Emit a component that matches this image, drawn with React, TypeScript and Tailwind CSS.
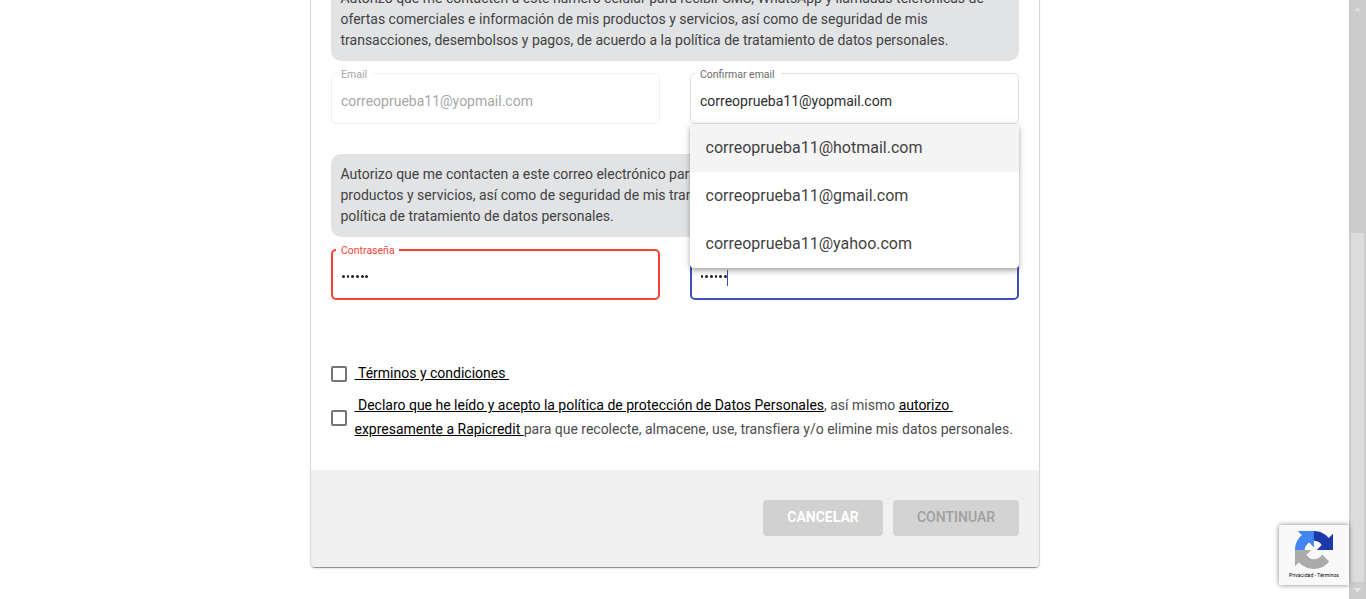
import type { ReactNode } from "react";

function Field({
  label,
  border,
  labelClass,
  children,
}: {
  label: string;
  border: string;
  labelClass: string;
  children: ReactNode;
}) {
  return (
    <div className={`relative flex h-[51px] w-[329px] items-center rounded-[5px] ${border}`}>
      <span
        className={`absolute left-0 bg-white text-[10.5px] leading-[12px] whitespace-nowrap ${labelClass}`}
      >
        {label}
      </span>
      {children}
    </div>
  );
}

function Notice({ children }: { children: ReactNode }) {
  return (
    <div className="rounded-[10px] bg-[#e1e3e5] p-[10px] pl-[9.5px] text-[14px] leading-[21px] whitespace-nowrap text-[#424242]">
      {children}
    </div>
  );
}

function Dots() {
  return (
    <span className="flex gap-[1.9px]">
      {[0, 1, 2, 3, 4, 5].map((i) => (
        <span key={i} className="h-[2.8px] w-[2.8px] rounded-full bg-[#222]" />
      ))}
    </span>
  );
}

function Checkbox() {
  return <span className="mt-[2px] h-4 w-4 shrink-0 rounded-[2px] border-2 border-[#757575] bg-white" />;
}

function Recaptcha() {
  return (
    <div className="absolute top-[525px] right-[17px] flex h-[60px] w-[70px] flex-col items-center rounded-l-[2px] bg-[#f9f9f9] pt-[6px] shadow-[0_0_5px_#808080]">
      <svg className="h-[38px] w-[38px]" viewBox="0 0 64 64">
        <path
          fill="#1C3AA9"
          d="M64 31.955l-.033-1.37V4.687l-7.16 7.16C50.948 4.674 42.033.093 32.05.093c-10.4 0-19.622 4.96-25.458 12.64l11.736 11.86a15.55 15.55 0 0 1 4.754-5.334c2.05-1.6 4.952-2.906 8.968-2.906.485 0 .86.057 1.135.163 4.976.393 9.288 3.14 11.828 7.124l-8.307 8.307L64 31.953"
        />
        <path
          fill="#4285F4"
          d="M31.862.094l-1.37.033H4.594l7.16 7.16C4.58 13.147 0 22.06 0 32.046c0 10.4 4.96 19.622 12.64 25.458L24.5 45.768a15.55 15.55 0 0 1-5.334-4.754c-1.6-2.05-2.906-4.952-2.906-8.968 0-.485.057-.86.163-1.135.393-4.976 3.14-9.288 7.124-11.828l8.307 8.307L31.86.095"
        />
        <path
          fill="#ABABAB"
          d="M.001 32.045l.033 1.37v25.898l7.16-7.16c5.86 7.173 14.774 11.754 24.76 11.754 10.4 0 19.622-4.96 25.458-12.64l-11.736-11.86a15.55 15.55 0 0 1-4.754 5.334c-2.05 1.6-4.952 2.906-8.968 2.906-.485 0-.86-.057-1.135-.163-4.976-.393-9.288-3.14-11.828-7.124l8.307-8.307c-10.522.04-22.4.066-27.295-.005"
        />
      </svg>
      <span className="mt-[2px] text-[5px] leading-[8px] tracking-[0.1px] whitespace-nowrap text-black">
        Privacidad - Términos
      </span>
    </div>
  );
}

function Scrollbar() {
  return (
    <div className="flex h-full w-[17px] shrink-0 flex-col items-center bg-[#cccccc]">
      <svg className="h-[17px] w-[17px] shrink-0" viewBox="0 0 17 17">
        <path d="M5 11L8.5 7L12 11Z" fill="#dcdcdd" />
      </svg>
      <div className="mt-[216px] h-[349px] w-[13px] bg-[#dcdcdd]" />
      <svg className="h-[17px] w-[17px] shrink-0" viewBox="0 0 17 17">
        <path d="M4.500 6L8.500 10.500L12.500 6Z" fill="#e6e6e6" />
      </svg>
    </div>
  );
}

const link = "text-black underline underline-offset-1";

export default function App() {
  return (
    <div className="relative flex h-[599px] w-full overflow-hidden bg-white font-['Roboto',sans-serif]">
      <main className="flex flex-1 items-start pl-[311px]">
        <section className="-mt-[40px] flex h-[607px] w-[728px] shrink-0 flex-col rounded-[4px] bg-white shadow-[0_0_0_1px_rgba(0,0,0,0.1),0_2px_1px_-1px_rgba(0,0,0,0.2),0_1px_1px_0_rgba(0,0,0,0.14),0_1px_3px_0_rgba(0,0,0,0.12)]">
          <div className="flex h-[510px] flex-col px-5 pt-[18px]">
            <Notice>
              Autorizo que me contacten a este número celular para recibir SMS, WhatsApp y llamadas telefónicas de
              <br />
              ofertas comerciales e información de mis productos y servicios, así como de seguridad de mis
              <br />
              transacciones, desembolsos y pagos, de acuerdo a la política de tratamiento de datos personales.
            </Notice>
            <div className="relative mt-3 flex justify-between">
              <Field label="Email" border="border border-[#f0f0f0] px-[9px]" labelClass="-top-[5px] pr-[6px] pl-[9px] ml-[4px] -indent-[4px] text-[#a6a6a6]">
                <span className="pt-[5px] text-[14px] text-[#a6a6a6]">correoprueba11@yopmail.com</span>
              </Field>
              <Field label="Confirmar email" border="border border-[#e0e0e0] px-[9px]" labelClass="-top-[5px] pr-[6px] pl-[9px] ml-[4px] -indent-[4px] text-[#6c6c6c]">
                <span className="pt-[5px] text-[14px] text-[#2c2c2c]">correoprueba11@yopmail.com</span>
              </Field>
              <ul className="absolute top-[51px] right-0 z-10 w-[329px] overflow-hidden rounded-b-[4px] bg-white text-[16px] leading-[48px] text-[#424242] shadow-[0_2px_4px_-1px_rgba(0,0,0,0.2),0_4px_5px_0_rgba(0,0,0,0.14),0_1px_10px_0_rgba(0,0,0,0.12)]">
                <li className="h-12 bg-[#f4f4f4] pl-[15.5px]">correoprueba11@hotmail.com</li>
                <li className="h-12 pl-[15.5px]">correoprueba11@gmail.com</li>
                <li className="h-12 pl-[15.5px]">correoprueba11@yahoo.com</li>
              </ul>
            </div>
            <div className="mt-[30px]">
              <Notice>
                Autorizo que me contacten a este correo electrónico para
                <br />
                productos y servicios, así como de seguridad de mis tran
                <br />
                política de tratamiento de datos personales.
              </Notice>
            </div>
            <div className="mt-3 flex justify-between">
              <Field label="Contraseña" border="border-2 border-[#f44336] px-[8px]" labelClass="-top-[6px] pr-[4px] pl-[8px] ml-[3px] -indent-[3px] text-[#f44336]">
                <span className="pt-[4px] pl-[1px]">
                  <Dots />
                </span>
              </Field>
              <div className="flex h-[51px] w-[329px] items-center rounded-[5px] border-2 border-[#3f51b5] px-[8px]">
                <span className="flex items-center pt-[6px] pl-[0.5px]">
                  <span className="-mt-[2px]">
                    <Dots />
                  </span>
                  <span className="ml-[0.5px] h-4 w-px bg-[#3f51b5]" />
                </span>
              </div>
            </div>
            <div className="mt-[61px] flex items-center gap-[7.5px] text-[14px] leading-6">
              <Checkbox />
              <a className={link}>&nbsp;Términos y condiciones&nbsp;</a>
            </div>
            <div className="mt-2 flex items-center gap-[7.5px] text-[14px] leading-6 tracking-[-0.005px] whitespace-nowrap text-[#4c4c4c]">
              <Checkbox />
              <p>
                <a className={link}>&nbsp;Declaro que he leído y acepto la política de protección de Datos Personales</a>
                , así mismo <a className={link}>autorizo&nbsp;</a>
                <br />
                <a className={link}>expresamente a Rapicredit&nbsp;</a>
                para que recolecte, almacene, use, transfiera y/o elimine mis datos personales.
              </p>
            </div>
          </div>
          <footer className="flex flex-1 items-start justify-end gap-[10px] rounded-b-[4px] bg-[#f0f0f0] px-5 pt-[30px] text-[14px] leading-[34px]">
            <button className="h-9 w-[120px] rounded-[4px] bg-[#d1d1d1] pb-[2px] font-bold text-white">CANCELAR</button>
            <button className="h-9 w-[126px] rounded-[4px] bg-[#d3d3d3] pb-[2px] font-medium text-[#a0a0a0]">CONTINUAR</button>
          </footer>
        </section>
      </main>
      <Scrollbar />
      <Recaptcha />
    </div>
  );
}
